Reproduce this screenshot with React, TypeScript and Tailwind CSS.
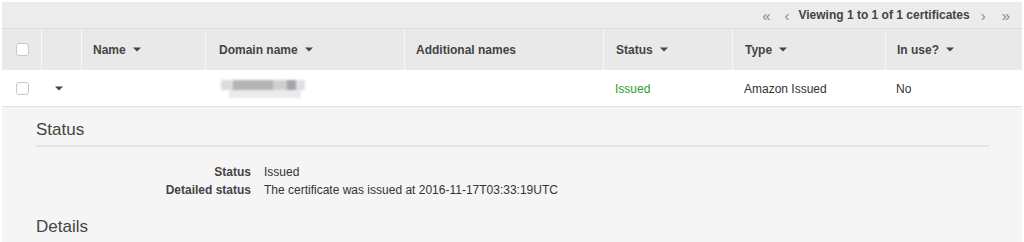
const font = { fontFamily: '"Liberation Sans", Arial, sans-serif' };

function Caret() {
  return (
    <svg width="8" height="5" viewBox="0 0 8 5" className="ml-[7px] inline-block">
      <path d="M0 0.5h8L4 4.5z" fill="#444" />
    </svg>
  );
}

function Checkbox() {
  return <div className="h-[13px] w-[13px] rounded-[3px] border border-[#c8c8c8] bg-white" />;
}

const cols = ["w-[39px]", "w-[40px]", "w-[124px]", "w-[199px]", "w-[199px]", "w-[129px]", "w-[153px]", "flex-1"];

export default function App() {
  return (
    <div className="h-[242px] w-[1024px] overflow-hidden bg-white text-[12px] text-[#333]" style={font}>
      <div className="mx-[2px] mt-[2px]">
        {/* pagination bar */}
        <div className="flex h-[27px] items-center justify-end border-b border-[#dcdcdc] bg-[#ececec] pr-[12px] text-[#555]">
          <span className="mr-[14px] text-[15px] leading-none text-[#888]">«</span>
          <span className="mr-[9px] text-[15px] leading-none text-[#888]">‹</span>
          <span className="font-bold text-[#444]">Viewing 1 to 1 of 1 certificates</span>
          <span className="ml-[11px] text-[15px] leading-none text-[#888]">›</span>
          <span className="ml-[16px] text-[15px] leading-none text-[#888]">»</span>
        </div>

        {/* header row */}
        <div className="flex h-[41px] bg-[#e9e9e9] font-bold text-[#444]">
          <div className={`${cols[0]} flex items-center justify-center pl-[2px]`}>
            <Checkbox />
          </div>
          <div className={`${cols[1]} border-l border-[#f7f7f7]`} />
          <div className={`${cols[2]} flex items-center border-l border-[#f7f7f7] pl-[11px]`}>
            Name <Caret />
          </div>
          <div className={`${cols[3]} flex items-center border-l border-[#f7f7f7] pl-[13px]`}>
            Domain name <Caret />
          </div>
          <div className={`${cols[4]} flex items-center border-l border-[#f7f7f7] pl-[11px]`}>Additional names</div>
          <div className={`${cols[5]} flex items-center border-l border-[#f7f7f7] pl-[12px]`}>
            Status <Caret />
          </div>
          <div className={`${cols[6]} flex items-center border-l border-[#f7f7f7] pl-[12px]`}>
            Type <Caret />
          </div>
          <div className={`${cols[7]} flex items-center border-l border-[#f7f7f7] pl-[11px]`}>
            In use? <Caret />
          </div>
        </div>

        {/* data row */}
        <div className="flex h-[37px] items-center border-b border-[#e2e2e2] bg-white pt-[1px]">
          <div className={`${cols[0]} flex items-center justify-center pl-[2px]`}>
            <Checkbox />
          </div>
          <div className={`${cols[1]} flex items-center pl-[14px]`}>
            <svg width="8" height="5" viewBox="0 0 8 5">
              <path d="M0 0.5h8L4 4.5z" fill="#444" />
            </svg>
          </div>
          <div className={cols[2]} />
          <div className={`${cols[3]} flex items-center pl-[16px]`}>
            <div className="flex flex-col blur-[1px]">
              <div className="flex">
                <div className="h-[10px] w-[12px] bg-[#dcdcdc]" />
                <div className="h-[10px] w-[40px] bg-[#b4b4b4]" />
                <div className="h-[10px] w-[14px] bg-[#cfcfcf]" />
                <div className="h-[10px] w-[9px] bg-[#a4a4a4]" />
                <div className="h-[10px] w-[9px] bg-[#dde0e6]" />
              </div>
              <div className="ml-[8px] h-[8px] w-[72px] bg-[#ebebeb]" />
            </div>
          </div>
          <div className={cols[4]} />
          <div className={`${cols[5]} pl-[12px] text-[#2ea02e]`}>Issued</div>
          <div className={`${cols[6]} pl-[12px]`}>Amazon Issued</div>
          <div className={`${cols[7]} pl-[11px]`}>No</div>
        </div>
      </div>

      {/* detail panel */}
      <div className="mx-[2px] bg-[#f5f5f5] pl-[34px] pr-[33px] pt-[13px] pb-[20px]">
        <div className="border-b-2 border-[#e4e4e4] pb-[5px] text-[17px] leading-[20px] text-[#444]">Status</div>
        <div className="mt-[18px] grid grid-cols-[215px_1fr] gap-x-[13px] gap-y-[3px] leading-[15px]">
          <div className="text-right font-bold text-[#444]">Status</div>
          <div>Issued</div>
          <div className="text-right font-bold text-[#444]">Detailed status</div>
          <div>The certificate was issued at 2016-11-17T03:33:19UTC</div>
        </div>
        <div className="mt-[19px] text-[17px] leading-[20px] text-[#444]">Details</div>
      </div>
    </div>
  );
}
